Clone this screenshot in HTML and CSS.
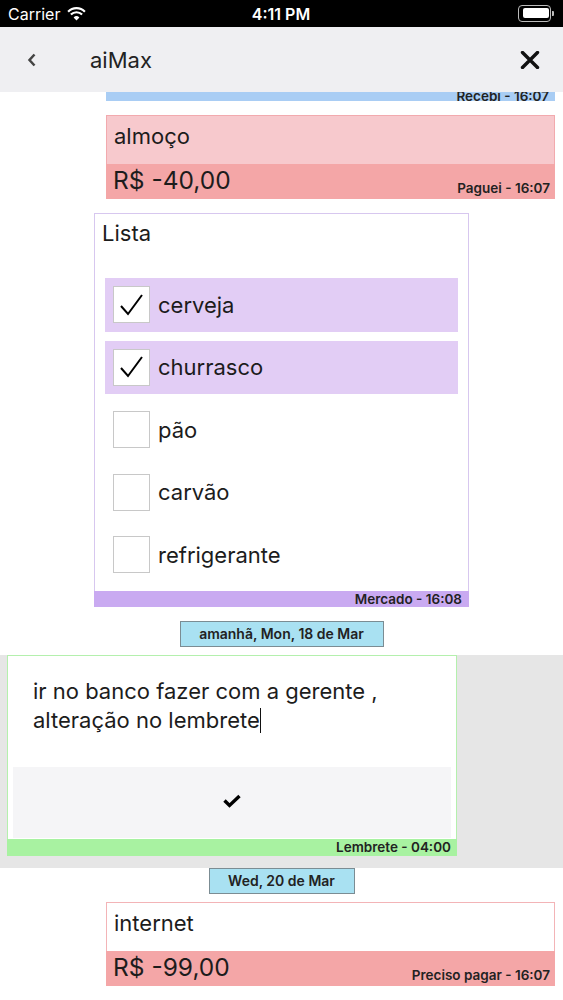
FILE: index.html
```html
<!DOCTYPE html>
<html lang="pt">
<head>
  <meta charset="UTF-8">
  <meta name="viewport" content="width=device-width, initial-scale=1.0">
  <title>aiMax</title>
  <link rel="stylesheet" href="styles.css">
</head>
<body>
  <!-- Status bar -->
  <div class="status-bar">
    <div class="status-left">
      <span>Carrier</span>
      <svg class="wifi" width="19" height="14" viewBox="0 0 19 14">
        <path d="M9.5 13.5 L6.6 10.4 A4.2 4.2 0 0 1 12.4 10.4 Z" fill="#fff"/>
        <path d="M3.9 7.6 A7.8 7.8 0 0 1 15.1 7.6" fill="none" stroke="#fff" stroke-width="2.2"/>
        <path d="M1.1 4.7 A11.8 11.8 0 0 1 17.9 4.7" fill="none" stroke="#fff" stroke-width="2.2"/>
      </svg>
    </div>
    <div class="status-time">4:11 PM</div>
    <div class="battery"><div class="battery-level"></div></div>
  </div>

  <!-- Navigation -->
  <div class="nav-bar">
    <svg class="nav-back" width="10" height="14" viewBox="0 0 10 14">
      <path d="M7.5 1.5 L2.5 7 L7.5 12.5" fill="none" stroke="#444" stroke-width="2.5"/>
    </svg>
    <div class="nav-title">aiMax</div>
    <svg class="nav-close" width="20" height="18" viewBox="0 0 20 18">
      <path d="M2.5 1.5 L17.5 16.5 M17.5 1.5 L2.5 16.5" stroke="#111" stroke-width="3.4" stroke-linecap="round"/>
    </svg>
  </div>

  <div class="feed">
    <!-- partially scrolled card -->
    <div class="clip-strip">
      <span class="meta">Recebi - 16:07</span>
    </div>

    <div class="card money">
      <div class="card-title paid">almoço</div>
      <div class="card-amount">
        <span class="amount">R$ -40,00</span>
        <span class="meta">Paguei - 16:07</span>
      </div>
    </div>

    <div class="card list">
      <div class="list-title">Lista</div>
      <div class="list-items">
        <div class="list-item done">
          <span class="checkbox">
            <svg width="26" height="24" viewBox="0 0 26 24"><path d="M2 13 L9 21 L23 2" fill="none" stroke="#000" stroke-width="2"/></svg>
          </span>
          <span>cerveja</span>
        </div>
        <div class="list-item done">
          <span class="checkbox">
            <svg width="26" height="24" viewBox="0 0 26 24"><path d="M2 13 L9 21 L23 2" fill="none" stroke="#000" stroke-width="2"/></svg>
          </span>
          <span>churrasco</span>
        </div>
        <div class="list-item"><span class="checkbox"></span><span>pão</span></div>
        <div class="list-item"><span class="checkbox"></span><span>carvão</span></div>
        <div class="list-item"><span class="checkbox"></span><span>refrigerante</span></div>
      </div>
      <div class="list-footer"><span class="meta">Mercado - 16:08</span></div>
    </div>

    <div class="date-pill">amanhã, Mon, 18 de Mar</div>

    <div class="edit-band">
      <div class="card reminder">
        <div class="reminder-text">ir no banco fazer com a gerente ,<br>alteração no lembrete<span class="cursor"></span></div>
        <div class="reminder-confirm">
          <svg width="20" height="14" viewBox="0 0 20 14"><path d="M2.5 6.5 L7.5 11.5 L17.5 2" fill="none" stroke="#000" stroke-width="3.4"/></svg>
        </div>
        <div class="reminder-footer"><span class="meta">Lembrete - 04:00</span></div>
      </div>
    </div>

    <div class="date-pill short">Wed, 20 de Mar</div>

    <div class="card money">
      <div class="card-title due">internet</div>
      <div class="card-amount">
        <span class="amount">R$ -99,00</span>
        <span class="meta">Preciso pagar - 16:07</span>
      </div>
    </div>
  </div>
</body>
</html>
```

FILE: styles.css
```css
/* Base */
* {
    box-sizing: border-box;
}

body {
    margin: 0;
    font-family: Inter, "Noto Sans", sans-serif;
    color: #1c1c1c;
    background: #fff;
}

.meta {
    font-size: 13.5px;
    font-weight: 600;
    color: #222;
}

/* Status bar */
.status-bar {
    height: 27px;
    background: #000;
    color: #fff;
    display: flex;
    align-items: center;
    justify-content: space-between;
    padding: 0 9px 0 8px;
    font-size: 16px;
}

.status-left {
    display: flex;
    align-items: center;
    gap: 7px;
    width: 120px;
}

.status-time {
    font-weight: 600;
}

.battery {
    width: 120px;
    display: flex;
    justify-content: flex-end;
    position: relative;
}

.battery::before {
    content: "";
    width: 31px;
    height: 15px;
    border: 1.5px solid #bbb;
    border-radius: 4px;
}

.battery-level {
    position: absolute;
    right: 5.5px;
    top: 2.5px;
    width: 26px;
    height: 10px;
    background: #fff;
    border-radius: 2px;
}

.battery::after {
    content: "";
    width: 2px;
    height: 5px;
    margin: auto 0 auto 1px;
    background: #bbb;
    border-radius: 0 1px 1px 0;
}

/* Navigation */
.nav-bar {
    height: 65px;
    background: #efeff2;
    display: flex;
    align-items: center;
    padding: 0 23px 0 27px;
}

.nav-title {
    margin-left: 53px;
    font-size: 22px;
    color: #222;
    flex: 1;
}

/* Feed */
.feed {
    display: flex;
    flex-direction: column;
}

.clip-strip {
    height: 9px;
    margin: 0 8px 0 106px;
    background: #a9cdf4;
    overflow: hidden;
    display: flex;
    justify-content: flex-end;
    align-items: flex-end;
    padding-right: 6px;
    line-height: 10px;
}

.card.money {
    margin: 14px 8px 0 106px;
}

.card-title {
    height: 49px;
    padding: 7px 7px 0;
    font-size: 22px;
    border: 1px solid #f3b4b7;
    border-bottom: none;
}

.card-title.paid {
    background: #f7c9cd;
    border-color: #f2aaae;
}

.card-title.due {
    background: #fff;
}

.card-amount {
    height: 35px;
    background: #f4a6a7;
    display: flex;
    justify-content: space-between;
    align-items: flex-end;
    padding: 0 5px 3px 7px;
}

.amount {
    font-size: 24.5px;
    line-height: 32px;
    align-self: flex-start;
}

/* Checklist */
.card.list {
    margin: 14px 0 0 94px;
    width: 375px;
    border: 1px solid #d7c7ef;
    border-bottom: none;
}

.list-title {
    font-size: 22px;
    padding: 6px 7px 0;
    height: 64px;
}

.list-items {
    display: flex;
    flex-direction: column;
    gap: 9px;
    padding: 0 10px;
}

.list-item {
    height: 53.5px;
    display: flex;
    align-items: center;
    gap: 8px;
    padding-left: 8px;
    font-size: 22px;
}

.list-item.done {
    background: #e2cdf5;
}

.checkbox {
    width: 37px;
    height: 37px;
    border: 1px solid #c8c8c8;
    background: #fff;
    display: flex;
    align-items: center;
    justify-content: center;
}

.list-footer {
    margin: 9px -1px 0;
    height: 16px;
    background: #c9aaf1;
    display: flex;
    justify-content: flex-end;
    align-items: center;
    padding-right: 7px;
}

/* Date pills */
.date-pill {
    align-self: center;
    margin-top: 14px;
    width: 204px;
    height: 26px;
    background: #a9e1f2;
    border: 1px solid #7b8c93;
    font-size: 14px;
    font-weight: 600;
    color: #222;
    display: flex;
    align-items: center;
    justify-content: center;
}

.date-pill.short {
    margin-top: 0;
    width: 146px;
}

/* Reminder editor */
.edit-band {
    margin-top: 8px;
    background: #e6e6e6;
    padding: 0 0 12px 7px;
}

.card.reminder {
    width: 450px;
    background: #fff;
    border: 1px solid #b4f0ad;
    border-bottom: none;
    padding: 0 5px;
}

.reminder-text {
    font-size: 22px;
    line-height: 29px;
    padding: 21px 0 0 20px;
    height: 111px;
}

.cursor {
    display: inline-block;
    width: 1.5px;
    height: 25px;
    background: #111;
    vertical-align: -5px;
}

.reminder-confirm {
    height: 71px;
    background: #f5f5f7;
    display: flex;
    align-items: center;
    justify-content: center;
    padding-bottom: 2px;
}

.reminder-footer {
    margin: 1px -6px 0;
    height: 17px;
    background: #a8f2a1;
    display: flex;
    justify-content: flex-end;
    align-items: center;
    padding-right: 6px;
}

.card.money:last-child {
    margin-top: 8px;
}
```
